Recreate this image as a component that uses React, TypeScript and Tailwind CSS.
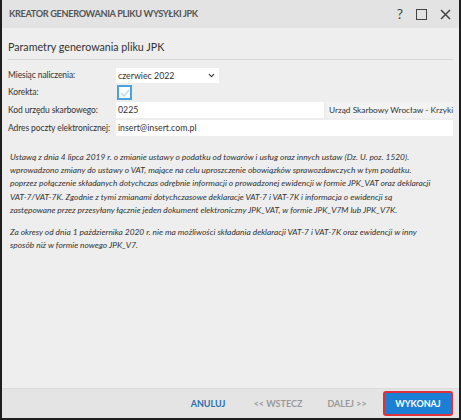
import { ChevronDown } from "lucide-react";

const font = { fontFamily: 'Lato, "Open Sans", sans-serif' };

function Row({ label, children }: { label: string; children: React.ReactNode }) {
    return (
        <div className="flex items-center">
            <span className="w-[108px] shrink-0 whitespace-nowrap text-[8.5px] tracking-[-0.1px] text-[#333]">
                {label}
            </span>
            {children}
        </div>
    );
}

export default function App() {
    return (
        <div
            className="w-[461px] h-[420px] flex flex-col bg-[#eeeeee] border-x-2 border-b-2 border-[#1e1e1e] overflow-hidden"
            style={font}
        >
            <div className="h-[28px] shrink-0 flex items-center justify-between pl-[7px] pr-[8px] bg-[#e3e3e3]">
                <span className="text-[9.2px] font-bold tracking-[-0.35px] text-[#555]">
                    KREATOR GENEROWANIA PLIKU WYSYŁKI JPK
                </span>
                <div className="flex items-center gap-[13px] text-[#444]">
                    <span className="text-[14px] leading-none">?</span>
                    <span className="w-[11px] h-[11px] border-[1.5px] border-[#444]" />
                    <svg width="11" height="11" viewBox="0 0 11 11">
                        <path d="M1 1 L10 10 M10 1 L1 10" stroke="#444" strokeWidth="1.5" />
                    </svg>
                </div>
            </div>

            <div className="flex-1 flex flex-col px-[6px]">
                <div className="pt-[11px] pb-[4px] border-b border-[#d6d6d6] text-[10.7px] text-[#333]">
                    Parametry generowania pliku JPK
                </div>

                <div className="flex flex-col gap-[2px] pt-[8px]">
                    <Row label="Miesiąc naliczenia:">
                        <div className="w-[103px] h-[15px] bg-white flex items-center justify-between pl-[2px] pr-[3px] text-[8.8px] text-[#333]">
                            czerwiec 2022
                            <ChevronDown size={9} strokeWidth={3} />
                        </div>
                    </Row>
                    <Row label="Korekta:">
                        <div className="w-[15px] h-[15px] ml-[1px] border-2 border-[#4aa3df] bg-white flex items-center justify-center">
                            <svg width="10" height="8" viewBox="0 0 10 8">
                                <path d="M1 4 L4 7 L9 1" fill="none" stroke="#b9dbf2" strokeWidth="1.5" />
                            </svg>
                        </div>
                    </Row>
                    <Row label="Kod urzędu skarbowego:">
                        <div className="w-[208px] h-[16px] bg-white flex items-center pl-[2px] text-[8.8px] text-[#333]">
                            0225
                        </div>
                        <div className="ml-[3px] flex-1 h-[16px] bg-[#f3f3f3] flex items-center pl-[2px] text-[8.3px] text-[#333] whitespace-nowrap overflow-hidden">
                            Urząd Skarbowy Wrocław - Krzyki
                        </div>
                    </Row>
                    <Row label="Adres poczty elektronicznej:">
                        <div className="flex-1 h-[16px] bg-white flex items-center pl-[2px] text-[8.8px] text-[#333]">
                            insert@insert.com.pl
                        </div>
                    </Row>
                </div>

                <div className="pt-[15px] pl-[2px] text-[8.4px] leading-[13.2px] italic text-[#333] whitespace-nowrap">
                    <p>
                        Ustawą z dnia 4 lipca 2019 r. o zmianie ustawy o podatku od towarów i usług oraz innych ustaw (Dz. U. poz. 1520).
                        <br />
                        wprowadzono zmiany do ustawy o VAT, mające na celu uproszczenie obowiązków sprawozdawczych w tym podatku.
                        <br />
                        poprzez połączenie składanych dotychczas odrębnie informacji o prowadzonej ewidencji w formie JPK_VAT oraz deklaracji
                        <br />
                        VAT-7/VAT-7K. Zgodnie z tymi zmianami dotychczasowe deklaracje VAT-7 i VAT-7K i informacja o ewidencji są
                        <br />
                        zastępowane przez przesyłany łącznie jeden dokument elektroniczny JPK_VAT, w formie JPK_V7M lub JPK_V7K.
                    </p>
                    <p className="mt-[9px]">
                        Za okresy od dnia 1 października 2020 r. nie ma możliwości składania deklaracji VAT-7 i VAT-7K oraz ewidencji w inny
                        <br />
                        sposób niż w formie nowego JPK_V7.
                    </p>
                </div>
            </div>

            <div className="h-[30px] shrink-0 flex items-center justify-end pr-[6px] bg-[#e4e4e4] border-t border-[#dcdcdc] text-[9px] font-bold">
                <span className="w-[70px] text-center text-[#2a6fae]">ANULUJ</span>
                <span className="w-[70px] text-center text-[#9a9a9a]">&lt;&lt; WSTECZ</span>
                <span className="w-[68px] text-center text-[#9a9a9a]">DALEJ &gt;&gt;</span>
                <button className="ml-[2px] w-[70px] h-[25px] rounded-[3px] border-2 border-[#e0303a] bg-[#1a7fd5] text-white text-[9px] font-bold">
                    WYKONAJ
                </button>
            </div>
        </div>
    );
}
